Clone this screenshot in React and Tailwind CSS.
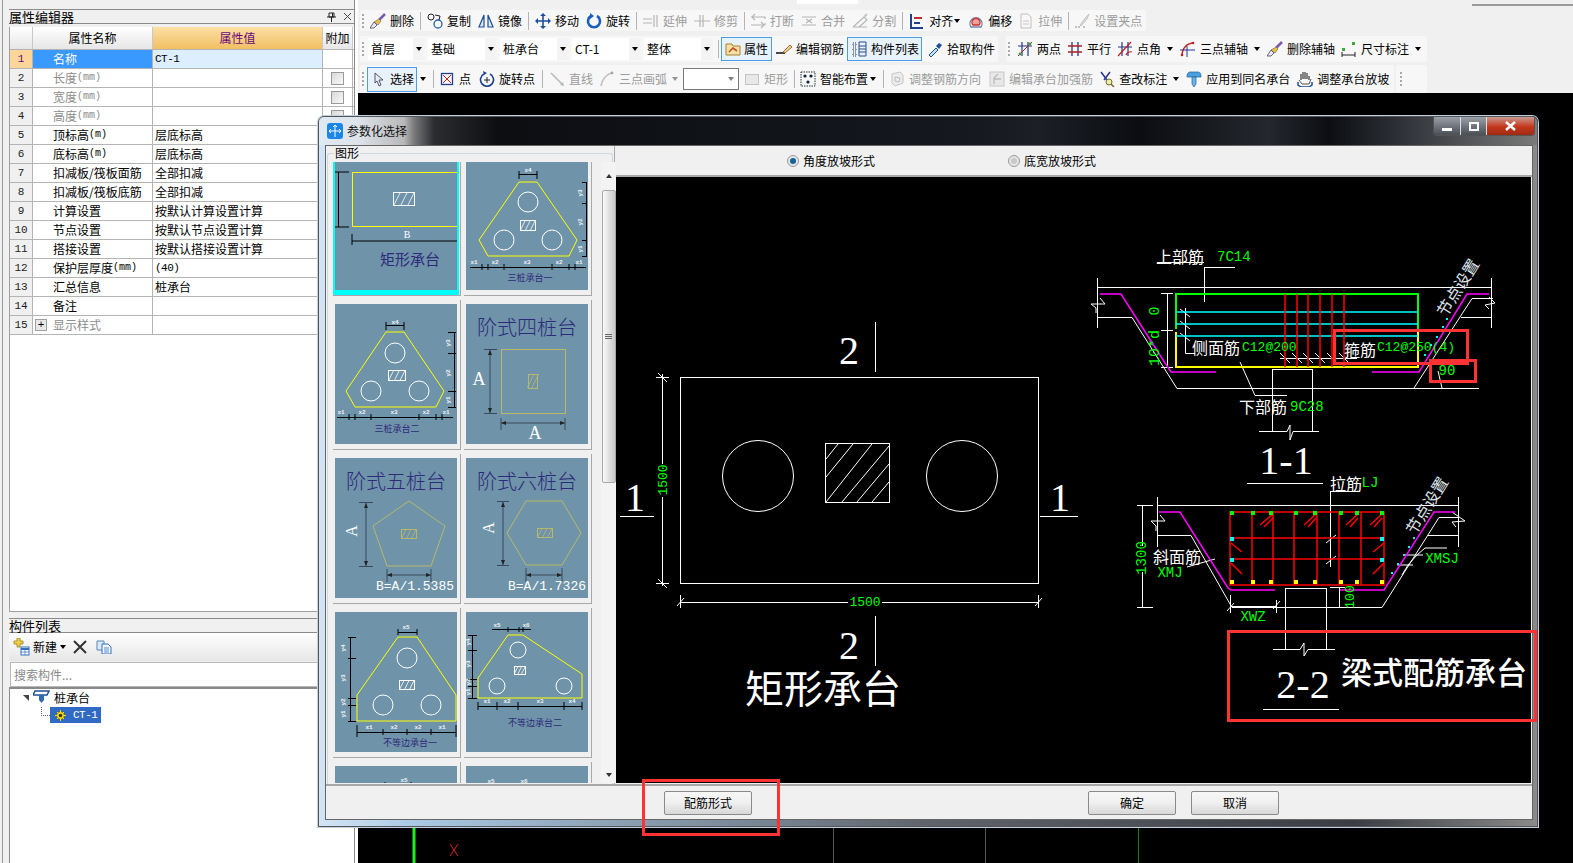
import React from "react";

const SANS = "'Noto Sans CJK SC','Liberation Sans',sans-serif";
const SERIF = "'Liberation Serif','Noto Sans CJK SC',serif";
const MONO = "'Liberation Mono','Noto Sans CJK SC',monospace";

const Ic = ({ children }) => (
  <svg width="16" height="16" viewBox="0 0 16 16" fill="none" className="shrink-0">{children}</svg>
);

const icons = {
  del: <Ic><path d="M15 1L9 7" stroke="#7a5bb0" strokeWidth="2.5" /><path d="M9 6l2 2-3 4-4-3z" fill="#e8c040" stroke="#665" strokeWidth=".6" /><path d="M4 9l3 3-3 3H0z" fill="#e8e8f0" stroke="#446" strokeWidth=".8" /></Ic>,
  copy: <Ic><circle cx="4" cy="4" r="3" stroke="#223" /><circle cx="11" cy="11" r="4" stroke="#2b5fa8" strokeWidth="1.3" /><path d="M8 2l5 1-1 4" stroke="#223" /></Ic>,
  mirror: <Ic><path d="M6 2L1 14h5zM10 2l5 12h-5z" stroke="#1d4f96" strokeWidth="1.2" fill="#dfe9f5" /></Ic>,
  move: <Ic><path d="M8 1v14M1 8h14" stroke="#1d4f96" strokeWidth="1.6" /><path d="M8 0l3 3H5zM8 16l3-3H5zM0 8l3-3v6zM16 8l-3-3v6z" fill="#1d4f96" /></Ic>,
  rotate: <Ic><path d="M5 3a6 6 0 1 0 6 0" stroke="#1a5fc0" strokeWidth="2.6" /><path d="M4 0v6l4-3z" fill="#1a5fc0" /></Ic>,
  extend: <Ic><path d="M0 6h9M0 10h9M11 2v12M14 2v12" stroke="#b5b5b5" strokeWidth="1.2" /></Ic>,
  trim: <Ic><path d="M0 8h16M6 2v12M9 2v12" stroke="#b5b5b5" strokeWidth="1.2" /></Ic>,
  brk: <Ic><path d="M1 4h14v2M1 12h14v-2M5 1L2 4l3 3M11 9l3 3-3 3" stroke="#b5b5b5" strokeWidth="1.1" /></Ic>,
  merge: <Ic><path d="M1 4h14M1 12h14M5 6l3 2 3-2M5 10l3-2 3 2" stroke="#b5b5b5" strokeWidth="1.1" /></Ic>,
  split: <Ic><path d="M1 14h14M1 14L12 4l3 3-8 7" stroke="#b5b5b5" strokeWidth="1.2" /><path d="M12 4l3-3" stroke="#c8c8c8" strokeWidth="2" /></Ic>,
  align: <Ic><path d="M2 1v14h12" stroke="#1d3f90" strokeWidth="2" /><path d="M5 5h8" stroke="#c03030" strokeWidth="2" /><path d="M5 10h6" stroke="#1d3f90" strokeWidth="2" /></Ic>,
  offset: <Ic><path d="M3 14a6 6 0 1 1 10 0z" stroke="#6d88a8" strokeWidth="1.4" /><path d="M5 12a4 4 0 1 1 6 0z" fill="#f0a0a0" stroke="#d03030" strokeWidth="1.4" /></Ic>,
  stretch: <Ic><path d="M3 1h7l3 3v11H3z" stroke="#c0c0c0" /><path d="M5 8h6M5 11h6" stroke="#c8c8c8" /></Ic>,
  grip: <Ic><path d="M1 14h5M9 14h2" stroke="#b0b0b0" strokeWidth="1.3" strokeDasharray="2 1" /><path d="M6 12l6-8 3-3-2 5-6 7z" fill="#dcdcdc" stroke="#bbb" strokeWidth=".8" /></Ic>,
  prop: <Ic><path d="M1 3h6l1 2h7v9H1z" fill="#f7e0a8" stroke="#a8812c" /><path d="M4 11l4-4 4 3" stroke="#c05020" strokeWidth="1.6" /></Ic>,
  rebar: <Ic><path d="M0 12h9" stroke="#111" strokeWidth="1.5" /><path d="M7 11l7-7 2 2-7 6z" fill="#f0d090" stroke="#8a4a20" strokeWidth=".8" /></Ic>,
  list: <Ic><path d="M1 2h3v3H1zM1 7h3v3H1zM1 12h3v3H1z" stroke="#334" strokeDasharray="1 1" /><path d="M7 1h7v14H7zM7 5h7M7 8h7M7 11h7" stroke="#2b4f86" /></Ic>,
  pick: <Ic><path d="M2 14l7-7 2 2-7 7z" fill="#bfe0f5" stroke="#234f90" /><path d="M9 5l3-3 3 2-3 4z" fill="#1d4f96" /></Ic>,
  twop: <Ic><path d="M5 1v14M11 1v14M1 5h14" stroke="#24358c" strokeWidth="1.2" /><path d="M1 15L15 1" stroke="#b02020" /><circle cx="3" cy="13" r="1.4" fill="#3a9a3a" /><circle cx="13" cy="3" r="1.4" fill="#3a9a3a" /></Ic>,
  para: <Ic><path d="M5 1v14M11 1v14" stroke="#24358c" strokeWidth="1.3" /><path d="M1 5h14M1 11h14" stroke="#b02020" strokeWidth="1.3" /></Ic>,
  angle: <Ic><path d="M5 1v14M11 1v14M1 6h14" stroke="#24358c" strokeWidth="1.2" /><path d="M1 15L14 1M9 14a5 5 0 0 1 6-3" stroke="#c02020" strokeWidth="1.2" /></Ic>,
  arc: <Ic><path d="M2 15C2 7 7 2 14 2" stroke="#c02020" strokeWidth="1.4" /><path d="M0 9h15M7 5v11" stroke="#24358c" /><circle cx="2" cy="14" r="1.3" fill="#c02020" /><circle cx="13" cy="2" r="1.3" fill="#c02020" /></Ic>,
  dim: <Ic><path d="M1 11v5M14 11v5M1 14h13" stroke="#222" /><rect x="1" y="7" width="3" height="3" fill="#3aa83a" /><rect x="11" y="1" width="3" height="3" fill="#3aa83a" /></Ic>,
  select: <Ic><path d="M4 2l8 7H8l2 5-2 1-2-5-2 2z" fill="#e8eef5" stroke="#445" strokeWidth=".9" /></Ic>,
  point: <Ic><rect x="2.5" y="2.5" width="11" height="11" stroke="#1d3f90" strokeWidth="1.3" /><path d="M4 4l8 8M12 4l-8 8" stroke="#d02020" /></Ic>,
  rotp: <Ic><path d="M5 3a6.5 6.5 0 1 0 6 0" stroke="#1d3f90" strokeWidth="1.6" /><path d="M4 0l1 4 3-2z" fill="#1d3f90" /><path d="M8 6v6M5 9h6" stroke="#222" /></Ic>,
  line: <Ic><path d="M2 2l11 11" stroke="#b8b8b8" strokeWidth="1.6" /><path d="M15 15l-4-1 3-3z" fill="#b8b8b8" /></Ic>,
  arcg: <Ic><path d="M2 15C3 8 7 4 12 2" stroke="#c4c4c4" strokeWidth="1.8" /><circle cx="13" cy="2" r="1.4" fill="#a8a8a8" /></Ic>,
  rect: <Ic><rect x="1.5" y="3.5" width="13" height="10" fill="#e8e8e8" stroke="#c4c4c4" /></Ic>,
  smart: <Ic><rect x="1" y="1" width="14" height="14" stroke="#233" strokeDasharray="1.5 1" /><circle cx="5" cy="5" r="1.6" fill="#123" /><circle cx="11" cy="5" r="1.6" fill="#123" /><circle cx="8" cy="11" r="1.6" fill="#123" /></Ic>,
  adj: <Ic><path d="M3 3l8-2 3 3v8l-8 3-3-3z" fill="#ececec" stroke="#c4c4c4" /><path d="M6 6l5 1-1 4-4-1z" stroke="#bbb" /></Ic>,
  edit: <Ic><rect x="1" y="1" width="14" height="14" fill="#e8e8e8" stroke="#c8c8c8" /><path d="M9 3L5 7v6M5 8h7" stroke="#bbb" strokeWidth="1.3" /></Ic>,
  check: <Ic><path d="M2 1l6 8M11 1L5 9" stroke="#24358c" strokeWidth="1.5" /><circle cx="10" cy="11" r="3" fill="#e8f0a8" stroke="#7a6a30" /><path d="M12 13l3 3" stroke="#7a6a30" strokeWidth="1.6" /></Ic>,
  apply: <Ic><path d="M1 5c0-3 2-4 3-4h8c1 0 3 1 3 4v1H1z" fill="#4aa0e0" stroke="#1d5f96" strokeWidth=".7" /><path d="M6 6h4v7l-2 3-2-3z" fill="#6ab4ea" stroke="#1d5f96" strokeWidth=".7" /></Ic>,
  slope: <Ic><path d="M4 9V3M6 8V1M8 8V1M10 8V2M12 9V5" stroke="#555" strokeWidth="1.4" /><path d="M2 9l3 4h7l2-5" stroke="#555" /><path d="M1 11v3l3 2h8l3-2v-3" stroke="#1d4f96" strokeWidth="1.5" /></Ic>,
};

const Arrow = ({ className = "" }) => (
  <span className={"inline-block shrink-0 w-[7px] h-[4px] relative " + className}>
    <span className="block w-0 h-0 border-x-[3.5px] border-t-[4px] border-x-transparent border-t-black" />
  </span>
);

const Grip = () => (
  <div className="flex flex-col gap-[2px] w-[2px] shrink-0">
    {[0, 1, 2, 3].map((i) => <span key={i} className="block w-[2px] h-[2px] bg-[#a8a8a8]" />)}
  </div>
);

const Sep = ({ className = "" }) => <span className={"block w-px h-[18px] bg-[#b4b4b4] shrink-0 " + className} />;

const Item = ({ ic, label, dis, arrow, className = "" }) => (
  <div className={"flex items-center shrink-0 gap-[4px] " + (dis ? "text-[#9c9c9c] " : "text-black ") + className}>
    {icons[ic]}
    <span className="whitespace-nowrap">{label}</span>
    {arrow === "tight" && <Arrow className="ml-[-3px]" />}
    {arrow === "near" && <Arrow className="ml-[-2px]" />}
    {arrow === "wide" && <Arrow className="ml-[2px]" />}
    {arrow === "dis" && <Arrow className="ml-[1px] opacity-40" />}
  </div>
);

const Combo = ({ w, label }) => (
  <div className={"flex items-center h-[22px] bg-white shrink-0 " + w}>
    <span className="flex-1 pl-[3px] whitespace-nowrap">{label}</span>
    <span className="w-[12px] h-full bg-[#f4f4f4] flex items-center justify-center"><Arrow /></span>
  </div>
);

const Toolbars = () => (
  <div className="flex flex-col shrink-0 bg-[#f0f0f0]">
    <div className="h-[10px] flex items-start">
      <div className="ml-[439px] w-[61px] h-[4px] bg-white" />
      <div className="ml-auto w-[101px] h-[2px] mt-[4px] bg-[#9a9a9a]" />
    </div>
    <div className="ml-[2px] w-[786px] h-[21px] pl-[2px] flex items-center bg-[#f7f7f7] rounded-[2px]">
      <Grip />
      <div className="ml-[6px] flex items-center gap-[7px]">
        <Item ic="del" label="删除" />
        <Sep className="ml-[-1px] mr-[-1px]" />
        <Item ic="copy" label="复制" />
        <Item ic="mirror" label="镜像" />
        <Sep className="ml-[-1px] mr-[-1px]" />
        <Item ic="move" label="移动" />
        <Item ic="rotate" label="旋转" />
        <Sep className="ml-[-1px] mr-[-1px]" />
        <Item ic="extend" label="延伸" dis />
        <Item ic="trim" label="修剪" dis />
        <Sep className="ml-[-1px] mr-[-2px]" />
        <Item ic="brk" label="打断" dis />
        <Item ic="merge" label="合并" dis />
        <Item ic="split" label="分割" dis />
        <Sep className="ml-[-1px] mr-[-1px]" />
        <Item ic="align" label="对齐" arrow="tight" />
        <Item ic="offset" label="偏移" />
        <Item ic="stretch" label="拉伸" dis className="ml-[-1px]" />
        <Sep className="ml-[-1px] mr-[-2px]" />
        <Item ic="grip" label="设置夹点" dis />
      </div>
    </div>
    <div className="mt-[5px] ml-[2px] flex h-[26px]">
      <div className="w-[638px] pl-[2px] flex items-center bg-[#f7f7f7] rounded-[2px]">
        <Grip />
        <div className="ml-[4px] flex items-center gap-[3px]">
          <Combo w="w-[57px]" label="首层" />
          <Combo w="w-[69px]" label="基础" />
          <Combo w="w-[69px]" label="桩承台" />
          <Combo w="w-[69px]" label="CT-1" />
          <Combo w="w-[69px]" label="整体" />
        </div>
        <Sep className="ml-[5px]" />
        <div className="ml-[2px] w-[51px] h-[24px] flex items-center pl-[3px] gap-[3px] border border-[#4a9ee8] bg-[#e8f2fb] shrink-0">
          {icons.prop}<span className="whitespace-nowrap">属性</span>
        </div>
        <Item ic="rebar" label="编辑钢筋" className="ml-[4px]" />
        <div className="ml-[3px] w-[75px] h-[24px] flex items-center pl-[4px] gap-[3px] border border-[#4a9ee8] bg-[#e8f2fb] shrink-0">
          {icons.list}<span className="whitespace-nowrap">构件列表</span>
        </div>
        <Item ic="pick" label="拾取构件" className="ml-[5px]" />
      </div>
      <div className="ml-[8px] w-[421px] pl-[2px] flex items-center bg-[#f7f7f7] rounded-[2px]">
        <Grip />
        <div className="ml-[7px] flex items-center gap-[6px]">
          <Item ic="twop" label="两点" />
          <Item ic="para" label="平行" />
          <Item ic="angle" label="点角" arrow="wide" />
          <Item ic="arc" label="三点辅轴" arrow="wide" />
          <Item ic="del" label="删除辅轴" />
          <Item ic="dim" label="尺寸标注" arrow="wide" />
        </div>
      </div>
    </div>
    <div className="mt-[3px] ml-[2px] flex h-[28px]">
      <div className="w-[1034px] pl-[2px] flex items-center bg-[#f7f7f7] rounded-[2px]">
        <Grip />
        <div className="ml-[3px] w-[50px] h-[25px] flex items-center pl-[3px] gap-[3px] border border-[#4a9ee8] bg-[#e8f2fb] shrink-0">
          {icons.select}<span className="whitespace-nowrap">选择</span>
        </div>
        <Arrow className="ml-[3px]" />
        <Sep className="ml-[6px]" />
        <Item ic="point" label="点" className="ml-[5px]" />
        <Item ic="rotp" label="旋转点" className="ml-[8px]" />
        <Sep className="ml-[7px]" />
        <Item ic="line" label="直线" dis className="ml-[6px]" />
        <Item ic="arcg" label="三点画弧" dis arrow="dis" className="ml-[6px]" />
        <div className="ml-[4px] w-[56px] h-[22px] flex items-center justify-end pr-[3px] bg-white border border-[#7a7a7a] shrink-0">
          <Arrow className="opacity-50" />
        </div>
        <Item ic="rect" label="矩形" dis className="ml-[5px]" />
        <Sep className="ml-[6px]" />
        <Item ic="smart" label="智能布置" arrow="near" className="ml-[5px]" />
        <Sep className="ml-[6px]" />
        <Item ic="adj" label="调整钢筋方向" dis className="ml-[5px]" />
        <Item ic="edit" label="编辑承台加强筋" dis className="ml-[8px]" />
        <Item ic="check" label="查改标注" arrow="wide" className="ml-[6px]" />
        <Item ic="apply" label="应用到同名承台" className="ml-[6px]" />
        <Item ic="slope" label="调整承台放坡" className="ml-[7px]" />
      </div>
      <div className="ml-[2px] w-[31px] pl-[4px] flex items-center bg-[#f7f7f7] rounded-[2px]">
        <Grip />
      </div>
    </div>
  </div>
);

const rows = [
  ["名称", "", "CT-1", "sel"],
  ["长度", "(mm)", "", "dis"],
  ["宽度", "(mm)", "", "dis"],
  ["高度", "(mm)", "", "dis"],
  ["顶标高", "(m)", "层底标高"],
  ["底标高", "(m)", "层底标高"],
  ["扣减板/筏板面筋", "", "全部扣减"],
  ["扣减板/筏板底筋", "", "全部扣减"],
  ["计算设置", "", "按默认计算设置计算"],
  ["节点设置", "", "按默认节点设置计算"],
  ["搭接设置", "", "按默认搭接设置计算"],
  ["保护层厚度", "(mm)", "(40)"],
  ["汇总信息", "", "桩承台"],
  ["备注", "", ""],
  ["显示样式", "", "", "plus"],
];

const PropRow = ({ r, i }) => {
  const sel = r[3] === "sel";
  const dis = r[3] === "dis";
  const plus = r[3] === "plus";
  return (
    <div className="flex h-[19px] border-b border-[#b4b4b4]">
      <div className={"w-[23px] shrink-0 flex items-center justify-center border-r border-[#b4b4b4] font-['Liberation_Mono'] text-[11px] " + (sel ? "bg-[#fdd49a] text-[#6a0a7a]" : "bg-[#f0f0f0] text-[#222]")}>{i + 1}</div>
      <div className={"w-[120px] shrink-0 flex items-center border-r border-[#b4b4b4] " + (plus ? "pl-[2px] " : "pl-[20px] ") + (sel ? "bg-[#3a99ff] text-white" : dis || plus ? "text-[#8c8c8c]" : "text-black")}>
        {plus && <span className="w-[12px] h-[12px] mr-[6px] border border-[#a0a0a0] bg-[#e8e8e8] flex items-center justify-center text-black font-['Liberation_Mono'] text-[11px]">+</span>}
        <span className="whitespace-nowrap">{r[0]}</span>
        {r[1] && <span className="font-['Liberation_Mono'] text-[10px]">{r[1]}</span>}
      </div>
      <div className={"w-[170px] shrink-0 flex items-center pl-[2px] border-r border-[#b4b4b4] whitespace-nowrap " + (sel ? "bg-[#ddeeff]" : "")}>
        {r[2] === "CT-1" || r[2] === "(40)" ? <span className="font-['Liberation_Mono'] text-[11px] tracking-[-0.5px]">{r[2]}</span> : r[2]}
      </div>
      <div className="w-[30px] shrink-0 flex items-center justify-center border-r border-[#b4b4b4]">
        {dis && <span className="block w-[13px] h-[13px] border border-[#9a9a9a] bg-[linear-gradient(135deg,#d8d8d8,#fafafa)]" />}
      </div>
    </div>
  );
};

const LeftPanel = () => (
  <div className="w-[358px] h-full shrink-0 flex bg-white">
    <div className="w-[9px] shrink-0 bg-[#f0f0f0] flex">
      <div className="w-[3px] border-r border-[#9a9a9a]" />
    </div>
    <div className="w-[346px] shrink-0 flex flex-col bg-[#f0f0f0] pt-[9px] border-r border-[#8a8a8a]">
      <div className="h-[15px] shrink-0 flex items-center justify-between border-y border-[#8a8a8a] text-[13px] pr-[2px]">
        <span className="tracking-[0px]">属性编辑器</span>
        <span className="flex items-center gap-[7px]">
          <svg width="9" height="10" viewBox="0 0 9 10"><path d="M2 1h5v4H2zM0 5h9M4.5 5v5M5.5 1v4" stroke="#222" fill="none" /></svg>
          <svg width="9" height="9" viewBox="0 0 9 9"><path d="M1 1l7 7M8 1l-7 7" stroke="#444" fill="none" /></svg>
        </span>
      </div>
      <div className="h-[3px] shrink-0" />
      <div className="h-[585px] shrink-0 bg-white border-l border-b border-[#a0a0a0]">
        <div className="flex h-[23px] border-b border-[#b4b4b4]">
          <div className="w-[23px] border-r border-[#c8c8c8] bg-[linear-gradient(#fff,#e6e6e6)]" />
          <div className="w-[120px] flex items-center justify-center border-r border-[#c8c8c8] bg-[linear-gradient(#fff,#e6e6e6)]">属性名称</div>
          <div className="w-[170px] flex items-center justify-center border-r border-[#c8c8c8] bg-[linear-gradient(#fcdfa6,#f2bf62)] text-[#6a0a7a]">属性值</div>
          <div className="w-[30px] flex items-center justify-center border-r border-[#c8c8c8] bg-[linear-gradient(#fff,#e6e6e6)]">附加</div>
        </div>
        {rows.map((r, i) => <PropRow key={i} r={r} i={i} />)}
      </div>
      <div className="h-[6px] shrink-0" />
      <div className="h-[15px] shrink-0 flex items-center border-y border-[#8a8a8a] text-[13px]">构件列表</div>
      <div className="h-[28px] shrink-0 flex items-center pl-[4px] bg-[linear-gradient(#fff,#e6e6e6)]">
        <svg width="17" height="18" viewBox="0 0 17 18" fill="none">
          <path d="M4 0h3v3h3v3H7v3H4V6H1V3h3z" fill="#f0d040" stroke="#9a8420" strokeWidth=".8" />
          <rect x="8" y="9" width="8" height="8" fill="#fff" stroke="#3070c0" />
          <path d="M8 11h8" stroke="#3070c0" strokeWidth="2" /><path d="M12 11v6M8 14h8" stroke="#3070c0" strokeWidth=".7" />
        </svg>
        <span className="ml-[3px]">新建</span>
        <Arrow className="ml-[3px]" />
        <svg className="ml-[6px]" width="14" height="14" viewBox="0 0 14 14"><path d="M1 1l12 12M13 1L1 13" stroke="#333" strokeWidth="2" /></svg>
        <svg className="ml-[9px]" width="16" height="14" viewBox="0 0 16 14" fill="none"><path d="M1 1h7v9H1z" fill="#dbe8f8" stroke="#5a88c0" /><path d="M6 4h6l3 3v7H6z" fill="#f4f8fd" stroke="#3070c0" /><path d="M8 8h5M8 10h5M8 12h5" stroke="#3070c0" strokeWidth=".8" /></svg>
      </div>
      <div className="h-[25px] shrink-0 ml-px mt-px flex items-center pl-[3px] bg-white border border-[#b8b8b8] text-[#8a8a8a]">搜索构件...</div>
      <div className="flex-1 bg-white border-l border-t-2 border-[#8a8a8a] pl-[13px] pt-[1px]">
        <div className="flex items-center h-[16px]">
          <span className="w-0 h-0 border-l-[6px] border-t-[6px] border-l-transparent border-t-[#444]" />
          <svg className="ml-[4px]" width="17" height="16" viewBox="0 0 17 16" fill="none">
            <path d="M2 1h14l-2 4H0z" fill="#fff" stroke="#1d4f96" strokeWidth="1.5" /><path d="M6 5h5v5l-2.5 3L6 10z" fill="#2d6ab0" />
          </svg>
          <span className="ml-[4px] text-[#000]">桩承台</span>
        </div>
        <div className="flex ml-[18px] mt-[1px]">
          <div className="w-[9px] h-[9px] border-l border-b border-dotted border-[#666]" />
          <div className="w-[51px] h-[16px] flex items-center bg-[#316ac5] text-white pl-[5px]">
            <svg width="11" height="11" viewBox="0 0 11 11"><circle cx="5.5" cy="5.5" r="4" fill="#f4e010" stroke="#222" strokeWidth=".6" /><path d="M0 5.5h11M5.5 0v11M2 2l7 7M9 2l-7 7" stroke="#f4e010" /><circle cx="5.5" cy="5.5" r="1.8" fill="#333" /></svg>
            <span className="ml-[7px] font-['Liberation_Mono'] text-[11px] tracking-[-0.5px]">CT-1</span>
          </div>
        </div>
      </div>
    </div>
  </div>
);

const Tx = ({ x, y, s = 12, c = "#fff", f = SANS, a = "middle", w, rot, children }) => (
  <text x={x} y={y} fontSize={s} fill={c} fontFamily={f} textAnchor={a} dominantBaseline="central" fontWeight={w}
    transform={rot !== undefined ? `rotate(${rot} ${x} ${y})` : undefined}>{children}</text>
);

const Hatch = ({ x, y, w, h, c = "#fff", n = 3 }) => (
  <g stroke={c} fill="none">
    <rect x={x + 0.5} y={y + 0.5} width={w} height={h} strokeWidth="1" />
    {Array.from({ length: n }, (_, i) => {
      const px = x + ((i + 0.6) * w) / n;
      return <path key={i} d={`M${px - h * 0.25} ${y + h}L${px + h * 0.25} ${y}`} strokeWidth=".8" />;
    })}
  </g>
);

const BLUE = "#2e2a7a";
const DIM = "#000";
const YEL = "#ffff00";
const SOFTY = "#b8b86a";
const Lab = ({ x, y, t }) => <Tx x={x} y={y} s={6} f={MONO} c="#f2f2f2" w="700">{t}</Tx>;
const Lv = ({ x, y, t }) => <Tx x={x} y={y} s={6} f={MONO} c="#f2f2f2" w="700" rot={-90}>{t}</Tx>;

const Cir = ({ x, y, r = 10 }) => <circle cx={x} cy={y} r={r} fill="none" stroke="#fff" strokeWidth="1" />;

const TitleT = ({ children }) => <Tx x={61} y={22} s={20} c={BLUE} w="300">{children}</Tx>;

const thumbs = [
  <g key="0">
    <path d="M0 22H14M0 77H14M3.5 22V77M17 84V95M17 91H122" stroke={DIM} fill="none" />
    <path d="M122 22.5H17.5V76.5H122" stroke={YEL} fill="none" />
    <Hatch x={58} y={42} w={21} h={13} />
    <Tx x={72} y={84} s={10} f={SERIF}>B</Tx>
    <Tx x={75} y={108} s={15} c={BLUE}>矩形承台</Tx>
  </g>,
  <g key="1">
    <path d="M53 32H71L111 90L103 106H22L13 90Z" stroke={YEL} fill="none" />
    <Cir x={62} y={52} /><Cir x={38} y={90} /><Cir x={86} y={90} />
    <Hatch x={54} y={70} w={15} h={10} />
    <path d="M53 21V29M71 21V29M53 24.5H71M116 32.5H121M116 53.5H121M116 90.5H121M116 106.5H121M120.5 32V106M4 117.5H120M16 114V120M22 114V120M38 114V120M86 114V120M103 114V120M109 114V120" stroke={DIM} fill="none" />
    <Lab x={62} y={20} t="x4" /><Lv x={114} y={43} t="y3" /><Lv x={114} y={72} t="y2" /><Lv x={114} y={99} t="y1" />
    <Lab x={8} y={112} t="x1" /><Lab x={29} y={112} t="x2" /><Lab x={61} y={112} t="x3" /><Lab x={93} y={112} t="x2" /><Lab x={113} y={112} t="x1" />
    <Tx x={64} y={127} s={9} c={BLUE}>三桩承台一</Tx>
  </g>,
  <g key="2">
    <path d="M51 28H69L109 87L101 103H20L11 87Z" stroke={YEL} fill="none" />
    <Cir x={60} y={49} /><Cir x={36} y={87} /><Cir x={84} y={87} />
    <Hatch x={53} y={66} w={17} h={10} />
    <path d="M51 18V26M69 18V26M51 21.5H69M113 28.5H121M113 49.5H121M113 87.5H121M113 103.5H121M119.5 28V103M2 113.5H118M14 110V116M20 110V116M36 110V116M84 110V116M101 110V116M107 110V116" stroke={DIM} fill="none" />
    <Lab x={60} y={18} t="x4" /><Lv x={113} y={39} t="y3" /><Lv x={113} y={69} t="y2" /><Lv x={113} y={96} t="y1" />
    <Lab x={6} y={108} t="x1" /><Lab x={27} y={108} t="x2" /><Lab x={59} y={108} t="x3" /><Lab x={91} y={108} t="x2" /><Lab x={111} y={108} t="x1" />
    <Tx x={62} y={124} s={9} c={BLUE}>三桩承台二</Tx>
  </g>,
  <g key="3">
    <TitleT>阶式四桩台</TitleT>
    <rect x="35.5" y="45.5" width="64" height="64" stroke={SOFTY} fill="none" />
    <Hatch x={62} y={70} w={9} h={14} c={SOFTY} n={2} />
    <path d="M18 45.5H31M18 109.5H31M24 46V109M35 114V126M99 114V126M35 119H99" stroke="#3a4a5a" fill="none" />
    <path d="M24 46l-2 5h4zM24 109l-2-5h4zM35 119l5-2v4zM99 119l-5-2v4z" fill="#222" />
    <Tx x={13} y={75} s={18} f={SERIF}>A</Tx><Tx x={69} y={129} s={18} f={SERIF}>A</Tx>
  </g>,
  <g key="4">
    <TitleT>阶式五桩台</TitleT>
    <path d="M74 43L110 68L96 108H52L38 68Z" stroke={SOFTY} fill="none" />
    <Hatch x={66} y={71} w={15} h={9} c={SOFTY} n={3} />
    <path d="M24 44.5H38M24 108.5H38M31 45V108M52 111V124M96 111V124M52 117H96" stroke="#3a4a5a" fill="none" />
    <path d="M31 45l-2 5h4zM31 108l-2-5h4zM52 117l5-2v4zM96 117l-5-2v4z" fill="#222" />
    <Tx x={16} y={73} s={16} f={SERIF} rot={-90}>A</Tx>
    <Tx x={80} y={128} s={13} f={MONO}>B=A/1.5385</Tx>
  </g>,
  <g key="5">
    <TitleT>阶式六桩台</TitleT>
    <path d="M60 43H96L115 75L96 107H60L41 75Z" stroke={SOFTY} fill="none" />
    <Hatch x={71} y={70} w={15} h={9} c={SOFTY} n={3} />
    <path d="M31 43.5H43M31 107.5H43M37 44V107M60 110V124M96 110V124M60 117H96" stroke="#3a4a5a" fill="none" />
    <path d="M37 44l-2 5h4zM37 107l-2-5h4zM60 117l5-2v4zM96 117l-5-2v4z" fill="#222" />
    <Tx x={22} y={70} s={16} f={SERIF} rot={-90}>A</Tx>
    <Tx x={81} y={128} s={13} f={MONO}>B=A/1.7326</Tx>
  </g>,
  <g key="6">
    <path d="M63 25H82L121 83V109H22V83Z" stroke={YEL} fill="none" />
    <Cir x={72} y={46} /><Cir x={48} y={93} /><Cir x={96} y={93} />
    <Hatch x={64} y={68} w={15} h={9} />
    <path d="M63 17V23M82 17V23M63 20.5H82M13 25.5H21M13 46.5H21M13 86.5H21M13 93.5H21M13 109.5H21M15.5 25V109M22 113V125M48 117V123M72 117V123M96 117V123M121 113V125M22 120.5H121" stroke={DIM} fill="none" />
    <Lab x={71} y={15} t="x5" /><Lv x={8} y={36} t="y4" /><Lv x={8} y={66} t="y3" /><Lv x={8} y={90} t="y2" /><Lv x={8} y={102} t="y1" />
    <Lab x={34} y={115} t="x1" /><Lab x={59} y={115} t="x2" /><Lab x={83} y={115} t="x2" /><Lab x={107} y={115} t="x1" />
    <Tx x={75} y={130} s={9} c={BLUE}>不等边承台一</Tx>
  </g>,
  <g key="7">
    <path d="M42 23H57L116 62V86H12V66Z" stroke={YEL} fill="none" />
    <Cir x={52} y={38} r={8} /><Cir x={31} y={74} r={8} /><Cir x={98} y={74} r={8} />
    <Hatch x={48} y={54} w={11} h={8} />
    <path d="M26 17.5H65M42 15V20M53 15V20M57 15V20M2 23.5H11M2 38.5H11M2 67.5H11M2 74.5H11M2 86.5H11M6.5 23V86M12 90V98M31 90V98M52 90V98M98 90V98M116 90V98M12 94.5H116" stroke={DIM} fill="none" />
    <Lab x={31} y={13} t="x5" /><Lab x={60} y={13} t="x6" />
    <Lv x={2} y={30} t="y4" /><Lv x={2} y={52} t="y3" /><Lv x={2} y={70} t="y2" /><Lv x={2} y={80} t="y1" />
    <Lab x={21} y={89} t="x1" /><Lab x={41} y={89} t="x2" /><Lab x={74} y={89} t="x3" /><Lab x={106} y={89} t="x4" />
    <Tx x={69} y={110} s={9} c={BLUE}>不等边承台二</Tx>
  </g>,
  <g key="8">
    <path d="M50 16V20M76 16V20" stroke={DIM} />
    <Lab x={69} y={14} t="x5" />
  </g>,
  <g key="9">
    <Lab x={25} y={15} t="x5" /><Lab x={58} y={15} t="x6" />
  </g>,
];

const Thumbs = () => (
  <div className="w-[264px] h-[621px] overflow-hidden shrink-0">
    <div className="mt-[-17px] grid grid-cols-[128px_128px] gap-x-[3px] gap-y-[4px]">
      {thumbs.map((t, i) => (
        <div key={i} className="w-[128px] h-[150px] pl-px pr-px shadow-[1px_1px_0_#a8a8a8]">
          <div className={"w-[126px] h-[150px] px-[2px] py-[5px] " + (i === 0 ? "bg-[#00ffff]" : "")}>
            <svg width="122" height="140" viewBox="0 0 122 140" className="block bg-[#6f93a9]">{t}</svg>
          </div>
        </div>
      ))}
    </div>
  </div>
);

const Scrollbar = () => (
  <div className="w-[15px] h-[621px] shrink-0 ml-[5px] bg-[#f3f3f3] flex flex-col items-center">
    <div className="h-[28px] flex items-center justify-center">
      <span className="w-0 h-0 border-x-[3.5px] border-b-[4px] border-x-transparent border-b-[#333]" />
    </div>
    <div className="w-[14px] h-[293px] rounded-[2px] border border-[#a8a8a8] bg-[linear-gradient(90deg,#fafafa,#c8c8c8)] flex flex-col items-center justify-center gap-[1px]">
      <span className="block w-[7px] h-px bg-[#666]" /><span className="block w-[7px] h-px bg-[#666]" /><span className="block w-[7px] h-px bg-[#666]" />
    </div>
    <div className="flex-1" />
    <div className="h-[16px] flex items-center justify-center">
      <span className="w-0 h-0 border-x-[3.5px] border-t-[4px] border-x-transparent border-t-[#333]" />
    </div>
  </div>
);

const GRN = "#00ff00";
const MAG = "#ff00ff";
const RED = "#ff0000";
const CYA = "#00ffff";

const Drawing = () => (
  <svg width="915" height="606" viewBox="616 177 915 606" className="block bg-black">
    <g stroke="#fff" fill="none" strokeWidth="1">
      <rect x="680.5" y="377.5" width="358" height="206" />
      <circle cx="758" cy="476" r="35.5" /><circle cx="962" cy="476" r="35.5" />
      <rect x="825.5" y="443.5" width="64" height="59" />
      <path d="M826 459L838 444M826 477L853 444M826 502L872 444M842 502L889 446M857 502L889 464M872 502L889 482" />
      <path d="M875.5 322V372M875.5 616V666M620 516.5H654M1040 516.5H1078" />
      <path d="M662.5 374V464M662.5 497V586M656 377.5H669M656 583.5H669M658 373L667 382M658 579L667 588" />
      <path d="M680 602.5H848M882 602.5H1038M680.5 595V608M1038.5 595V608M677 606L684 598M1035 606L1042 598" />
    </g>
    <Tx x={849} y={350} s={40} f={SERIF}>2</Tx>
    <Tx x={849} y={645} s={40} f={SERIF}>2</Tx>
    <Tx x={635} y={497} s={40} f={SERIF}>1</Tx>
    <Tx x={1060} y={497} s={40} f={SERIF}>1</Tx>
    <Tx x={663} y={480} s={13} f={MONO} c={GRN} rot={-90}>1500</Tx>
    <Tx x={865} y={602} s={13} f={MONO} c={GRN}>1500</Tx>
    <Tx x={823} y={686} s={39}>矩形承台</Tx>

    <g stroke="#fff" fill="none" strokeWidth="1">
      <path d="M1097 287.5H1491M1097.5 278V328M1491.5 278V328M1097 317.5H1132L1177 388.5H1479M1414 388L1472 298.5H1493M1461 317.5H1491" />
      <path d="M1091 304H1105L1100 298M1091 304L1096 308V313M1489 297L1495 303L1485 305L1489 309" />
      <path d="M1157 262.5H1204M1204.5 267V302M1204 267.5H1235M1167.5 293V367M1161 293.5H1173M1161 330.5H1173M1161 367.5H1173" />
      <path d="M1180 309L1190 317M1180 321L1190 329M1180 333L1190 341M1185.5 308V353.5H1195" />
      <path d="M1280 358.5H1357M1280 353L1290 363M1292 353L1302 363M1303 353L1313 363M1315 353L1325 363M1327 353L1337 363M1339 353L1349 363" />
      <path d="M1240 362L1255 395.5H1287M1272.5 369V431M1312.5 369V431M1272 369.5H1312M1259 431.5H1287L1290 425V440L1293 431.5H1319" />
      <path d="M1247 483.5H1323M1438 371L1442 388" />
    </g>
    <path d="M1100 294H1121L1167 366L1171 372H1216M1372 372H1419L1467 294H1489" stroke={MAG} strokeWidth="1.5" fill="none" />
    <path d="M1176 329V294H1418V329" stroke={GRN} strokeWidth="2" fill="none" />
    <path d="M1176 332V367H1418V332" stroke={YEL} strokeWidth="2" fill="none" />
    <path d="M1176 312H1418M1176 324H1418M1176 336H1418" stroke={CYA} strokeWidth="1.5" fill="none" />
    <path d="M1285 294V367M1297 294V367M1308 294V367M1320 294V367M1332 294V367M1344 294V367" stroke={RED} strokeWidth="1.5" fill="none" />
    <g fill={CYA}>{[[1447, 319], [1443, 327], [1437, 337], [1431, 345], [1425, 355]].map((p, i) => <rect key={i} x={p[0] - 1} y={p[1] - 1} width="2" height="2" />)}</g>
    <Tx x={1180} y={256} s={16}>上部筋</Tx>
    <Tx x={1217} y={257} s={14} f={MONO} c={GRN} a="start">7C14</Tx>
    <Tx x={1155} y={311} s={15} f={MONO} c={GRN} rot={-90}>0</Tx>
    <Tx x={1155} y={348} s={15} f={MONO} c={GRN} rot={-90}>10*d</Tx>
    <Tx x={1216} y={347} s={16}>侧面筋</Tx>
    <Tx x={1242} y={347} s={13} f={MONO} c={GRN} a="start">C12@200</Tx>
    <Tx x={1360} y={349} s={16}>箍筋</Tx>
    <Tx x={1377} y={347} s={13} f={MONO} c={GRN} a="start">C12@250(4)</Tx>
    <Tx x={1447} y={371} s={14} f={MONO} c={GRN}>90</Tx>
    <Tx x={1263} y={406} s={16}>下部筋</Tx>
    <Tx x={1290} y={407} s={14} f={MONO} c={GRN} a="start">9C28</Tx>
    <Tx x={1286} y={460} s={40} f={SERIF}>1-1</Tx>
    <Tx x={1457} y={287} s={16} c="#dfe6ee" rot={-58}>节点设置</Tx>

    <g stroke="#fff" fill="none" strokeWidth="1">
      <path d="M1157 505.5H1458M1157.5 497V547M1458.5 497V547M1157 535.5H1191L1232 607.5H1382L1439 517.5H1458M1428 535.5H1458" />
      <path d="M1151 521H1165L1160 515M1151 521L1156 526V531M1452 512L1465 521L1452 522L1456 527" />
      <path d="M1142.5 505V546M1142.5 572V607M1137 505.5H1153M1137 607.5H1153" />
      <path d="M1187 567L1215 559M1330 491.5H1360M1330.5 491V567M1326 543L1336 535M1326 564L1336 556" />
      <path d="M1402 575L1408 565L1417 555L1425 548H1447M1397 565H1413M1405 555H1423" />
      <path d="M1285.5 588V649M1326.5 588V649M1285 588.5H1326M1273 649.5H1300L1304 643V656L1308 649.5H1335" />
      <path d="M1230 606.5H1276M1230.5 595V613M1276.5 600V613M1227 611L1234 603M1273 609L1280 601M1339.5 588V608M1330 587.5H1345" />
      <path d="M1263 709.5H1339" />
    </g>
    <path d="M1159 512H1180L1228 588L1231 590H1275M1340 590H1384L1434 512H1455" stroke={MAG} strokeWidth="1.5" fill="none" />
    <g stroke={RED} strokeWidth="1.5" fill="none">
      <rect x="1230" y="512" width="154" height="73" />
      <path d="M1252 512V585M1273 512V585M1294 512V585M1317 512V585M1339 512V585M1361 512V585M1230 538H1384M1230 559H1384" />
      <path d="M1260 525L1273 514M1264 527L1273 518M1304 525L1316 514M1308 527L1316 518M1346 525L1358 514M1350 527L1358 518M1370 525L1382 514M1374 527L1382 518" />
      <path d="M1231 543L1242 552M1231 563L1242 574M1384 543L1373 552M1384 563L1373 574" />
    </g>
    <g fill={GRN}>{[1232, 1253, 1271, 1296, 1315, 1341, 1357, 1382].map((x) => <rect key={x} x={x - 2} y={511} width="4" height="4" />)}</g>
    <g fill={YEL}>{[1232, 1253, 1271, 1296, 1315, 1341, 1357, 1382].map((x) => <rect key={x} x={x - 2} y={580} width="4" height="4" />)}</g>
    <g fill={CYA}>{[[1232, 539], [1232, 560], [1382, 539], [1382, 560]].map((p, i) => <rect key={i} x={p[0] - 2} y={p[1] - 2} width="4" height="4" />)}</g>
    <g fill={CYA}>{[[1414, 538], [1409, 547], [1404, 555], [1398, 564], [1392, 573]].map((p, i) => <rect key={i} x={p[0] - 1} y={p[1] - 1} width="2" height="2" />)}</g>
    <Tx x={1142} y={558} s={14} f={MONO} c={GRN} rot={-90}>1300</Tx>
    <Tx x={1177} y={556} s={16}>斜面筋</Tx>
    <Tx x={1170} y={573} s={14} f={MONO} c={GRN}>XMJ</Tx>
    <Tx x={1346} y={483} s={16}>拉筋</Tx>
    <Tx x={1370} y={483} s={14} f={MONO} c={GRN}>LJ</Tx>
    <Tx x={1442} y={559} s={14} f={MONO} c={GRN}>XMSJ</Tx>
    <Tx x={1253} y={617} s={14} f={MONO} c={GRN}>XWZ</Tx>
    <Tx x={1350} y={597} s={13} f={MONO} c={GRN} rot={-90}>100</Tx>
    <Tx x={1303} y={684} s={40} f={SERIF}>2-2</Tx>
    <Tx x={1426} y={505} s={16} c="#dfe6ee" rot={-58}>节点设置</Tx>
    <Tx x={1434} y={670} s={31} w="500">梁式配筋承台</Tx>
  </svg>
);

const Radio = ({ on, label, className = "" }) => (
  <div className={"flex items-center gap-[4px] " + className}>
    <span className="w-[12px] h-[12px] rounded-full border border-[#9a9a9a] bg-[#e6e6e6] flex items-center justify-center">
      <span className={"block w-[6px] h-[6px] rounded-full " + (on ? "bg-[#12629c]" : "bg-[#c8c8c8]")} />
    </span>
    <span className="whitespace-nowrap">{label}</span>
  </div>
);

const Btn = ({ children, className = "" }) => (
  <div className={"w-[88px] h-[24px] flex items-center justify-center rounded-[2px] border border-[#8a8a8a] bg-[linear-gradient(#f7f7f7,#f0f0f0_48%,#d8d8d8)] shrink-0 " + className}>{children}</div>
);

const Dialog = () => (
  <div className="absolute left-[318px] top-[116px] w-[1220px] h-[711px] rounded-t-[6px] flex flex-col bg-[linear-gradient(90deg,#d3e5f5,#a9c8e4_8%,#5f646c_50%,#3a3d44_85%,#8a8a8a)] border border-[#555] shadow-[0_0_0_1px_#c0d0e0]">
    <div className="h-[28px] shrink-0 relative flex items-center rounded-t-[6px] pl-[8px] bg-[linear-gradient(90deg,#dfeaf4_0px,#dde3ea_40px,#b8b8b8_85px,#7a7a7a_95px,#2a2c30_115px,#0c0e12_180px,#15181e_650px,#1c1f26_720px,#0b0d11_820px,#24272d_950px,#0c0e12_1010px,#2d3036_1080px,#7a7a7a_1218px)]">
      <div className="w-[16px] h-[16px] rounded-[3px] bg-[#1a86e8] flex items-center justify-center">
        <svg width="12" height="12" viewBox="0 0 12 12" fill="none"><path d="M6 0v12M0 6h12M2 4L0 6l2 2M10 4l2 2-2 2M4 2l2-2 2 2" stroke="#fff" /></svg>
      </div>
      <span className="ml-[4px] text-[#111]">参数化选择</span>
      <div className="absolute right-[2px] top-0 h-[19px] flex rounded-b-[4px] overflow-hidden border border-t-0 border-[#555]">
        <div className="w-[27px] flex items-center justify-center bg-[linear-gradient(#9aa0a8,#4a4e55)] border-r border-[#ddd]"><span className="block w-[10px] h-[3px] bg-white mt-[6px]" /></div>
        <div className="w-[26px] flex items-center justify-center bg-[linear-gradient(#9aa0a8,#4a4e55)] border-r border-[#ddd]"><span className="block w-[10px] h-[9px] border-2 border-white" /></div>
        <div className="w-[47px] flex items-center justify-center bg-[linear-gradient(#c99a90,#c4361c_55%,#a02a14)]">
          <svg width="11" height="10" viewBox="0 0 11 10"><path d="M1 1l9 8M10 1l-9 8" stroke="#fff" strokeWidth="2.4" /></svg>
        </div>
      </div>
    </div>
    <div className="ml-[6px] mr-[4px] flex-1 flex flex-col border border-[#666] bg-[#f0f0f0] mb-[6px]">
      <div className="flex h-[638px] shrink-0">
        <div className="w-[288px] shrink-0 relative pl-[6px] pt-[16px]">
          <div className="absolute left-[1px] right-[1px] top-[7px] bottom-0 border-t border-x border-[#d0d8e0] rounded-t-[3px]" />
          <span className="absolute left-[8px] top-[1px] px-[1px] bg-[#f0f0f0]">图形</span>
          <div className="flex relative"><Thumbs /><Scrollbar /></div>
        </div>
        <div className="flex-1 flex flex-col border-l border-[#a8a8a8] pl-px">
          <div className="h-[31px] shrink-0 flex items-center border-b-2 border-[#a8a8a8]">
            <Radio on label="角度放坡形式" className="ml-[171px]" />
            <Radio label="底宽放坡形式" className="ml-[133px]" />
          </div>
          <Drawing />
        </div>
      </div>
      <div className="flex-1 flex items-center border-t-2 border-[#a8a8a8] pl-[338px]">
        <Btn>配筋形式</Btn>
        <Btn className="ml-[336px]">确定</Btn>
        <Btn className="ml-[15px]">取消</Btn>
      </div>
    </div>
  </div>
);

export default function App() {
  return (
    <div className="relative w-[1573px] h-[863px] overflow-hidden flex bg-[#f0f0f0] text-[12px] leading-none text-black font-['Noto_Sans_CJK_SC','Liberation_Sans',sans-serif]">
      <LeftPanel />
      <div className="flex-1 flex flex-col min-w-0">
        <Toolbars />
        <div className="flex-1 bg-black relative">
          <svg width="1215" height="770" viewBox="358 93 1215 770" className="block">
            <path d="M414 827V863" stroke="#22ee22" strokeWidth="3" />
            <path d="M408 827H420" stroke="#22ee22" strokeWidth="1.5" />
            <path d="M833.5 827V863M985.5 827V863" stroke="#555" />
            <path d="M1138.5 827V863" stroke="#1a7a1a" />
            <path d="M450 844L458 856M458 844L450 856" stroke="#e02020" />
          </svg>
        </div>
      </div>
      <Dialog />
      <div className="absolute left-[642px] top-[779px] w-[138px] h-[57px] border-[3px] border-[#f33]" />
      <div className="absolute left-[1333px] top-[329px] w-[136px] h-[36px] border-[3px] border-[#f33]" />
      <div className="absolute left-[1429px] top-[359px] w-[48px] h-[24px] border-[3px] border-[#f33]" />
      <div className="absolute left-[1227px] top-[630px] w-[310px] h-[92px] border-[3px] border-[#f33]" />
    </div>
  );
}
